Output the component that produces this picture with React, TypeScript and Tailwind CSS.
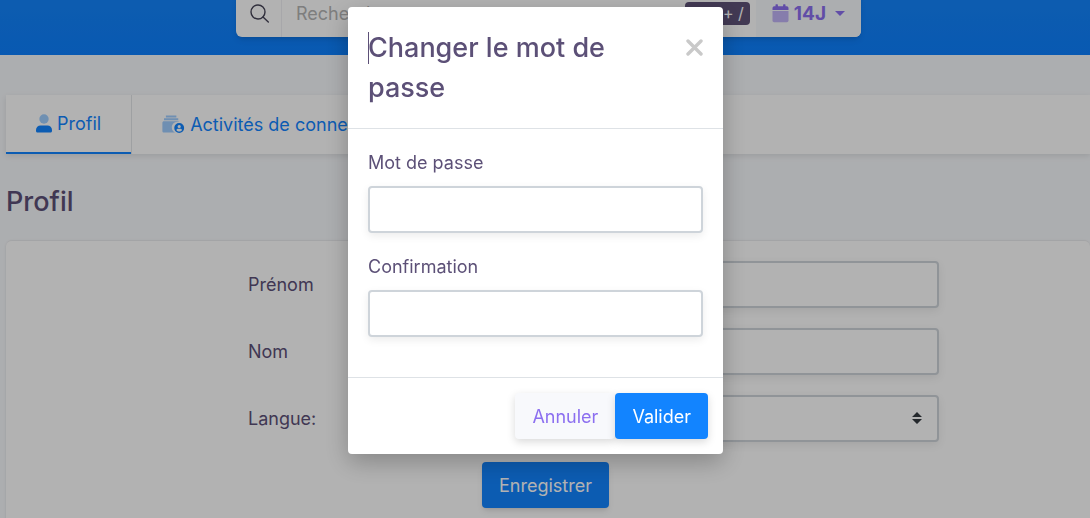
import { useState } from "react";
import type { InputHTMLAttributes } from "react";

const fieldClass =
  "h-[47px] w-full rounded border-2 border-[#ced4da] bg-white px-4 text-[18px] text-[#5c5077] shadow-[0_3px_8px_rgba(0,0,0,0.08)] outline-none";

function SearchIcon() {
  return (
    <svg width="20" height="20" viewBox="0 0 20 20" fill="none" stroke="#464457" strokeWidth="1.4" strokeLinecap="round">
      <circle cx="9" cy="8" r="7" />
      <path d="M14 13 19.300 18" />
    </svg>
  );
}

function CalendarIcon() {
  return (
    <svg width="17" height="19" viewBox="0 0 17 19" fill="#8c6ff0">
      <path d="M.5 7h16v9.6a1.6 1.6 0 0 1-1.6 1.6H2.1A1.6 1.6 0 0 1 .5 16.6z" opacity=".5" />
      <path d="M.5 6V4a1.7 1.7 0 0 1 1.7-1.7H3.5V.8c0-.4.3-.6.6-.6h1.2c.3 0 .6.2.6.6v1.5h5.2V.8c0-.4.3-.6.6-.6h1.2c.3 0 .6.2.6.6v1.5h1.3A1.7 1.7 0 0 1 16.5 4v2z" />
    </svg>
  );
}

function UserIcon() {
  return (
    <svg width="16" height="19" viewBox="0 0 16 19" fill="#1284ff">
      <circle cx="8" cy="5" r="4.7" opacity=".4" />
      <path d="M4.5 11.4h7a4.5 4.5 0 0 1 4.5 4.5v1.1c0 .9-.6 1.5-1.5 1.5h-13C.6 18.5 0 17.9 0 17v-1.1a4.5 4.5 0 0 1 4.5-4.5z" />
    </svg>
  );
}

function ActivityIcon() {
  return (
    <svg width="23" height="19" viewBox="0 0 24 20" fill="#1284ff">
      <g opacity=".4">
        <path d="M4 .5h11v2H4zM2 3.500h15v2H2z" />
        <path d="M2 6.5h14.5c.7 0 1.2.3 1.5.9a6 6 0 0 0-4.5 11.1H2c-1 0-1.7-.7-1.7-1.7V8.200c0-1 .7-1.7 1.7-1.7z" />
      </g>
      <path
        fillRule="evenodd"
        d="M18 8.5a5.2 5.2 0 1 1 0 10.4 5.2 5.2 0 0 1 0-10.4zm0 1.9a1.7 1.7 0 1 0 0 3.400 1.7 1.7 0 0 0 0-3.4zm-1.200 4.100c-1 0-1.700.6-1.700 1.500.7.800 1.700 1.300 2.900 1.300s2.200-.5 2.900-1.300c0-.9-.7-1.500-1.700-1.500z"
      />
    </svg>
  );
}

interface FieldProps extends InputHTMLAttributes<HTMLInputElement> {
  id: string;
  label: string;
}

function ModalField({ id, label, ...props }: FieldProps) {
  return (
    <div className="mb-5">
      <label htmlFor={id} className="mb-2.5 block">
        {label}
      </label>
      <input id={id} className={fieldClass} {...props} />
    </div>
  );
}

function ProfileField({ id, label, ...props }: FieldProps) {
  return (
    <>
      <label htmlFor={id}>{label}</label>
      <input id={id} className={fieldClass} {...props} />
    </>
  );
}

export default function App() {
  const [open, setOpen] = useState(true);

  return (
    <div className="h-screen overflow-hidden bg-[#f7f9fc] font-[Inter,sans-serif] text-[18px] leading-[27px] text-[#5c5077]">
      <header className="flex justify-center bg-linear-to-b from-[#1485fc] to-[#0c80ff] pb-[18px] pl-[7px]">
        <div className="-mt-2.5 flex h-[47px] w-[625px] overflow-hidden rounded-md bg-white shadow-md">
          <label htmlFor="search" className="flex w-[46px] items-center justify-center border-r border-[#f0f0f4]">
            <SearchIcon />
          </label>
          <input
            id="search"
            type="search"
            placeholder="Rechercher"
            className="min-w-0 flex-1 px-3.5 outline-none placeholder:text-[#b5b5b5]"
          />
          <div className="flex items-center pr-1.5">
            <kbd className="rounded-sm bg-[#5f5278] px-1.5 font-[Inter,sans-serif] text-[16px] leading-[23px] text-white">Ctrl + /</kbd>
          </div>
          <button type="button" className="flex items-center gap-[5px] bg-[#f7f9fc] px-4 font-bold text-[#8c6ff0]">
            <CalendarIcon />
            <span className="text-[19px]">14J</span>
            <svg className="ml-1" width="10" height="5" viewBox="0 0 10 5" fill="currentColor">
              <path d="M0 0h10L5 5z" />
            </svg>
          </button>
        </div>
      </header>

      <main className="pl-1.5 pt-10">
        <nav className="flex h-[59px] bg-white shadow-[0_2px_6px_rgba(0,0,0,0.1)]">
          <a href="#profil" className="flex items-center gap-[5px] border-b-2 border-[#1284ff] px-[30px] text-[#1284ff]">
            <UserIcon />
            Profil
          </a>
          <a href="#activites" className="flex items-center gap-[5px] border-l border-[#e3e5e8] px-[30px] text-[#1284ff]">
            <ActivityIcon />
            Activités de connexion
          </a>
        </nav>

        <h1 className="mb-[18px] mt-7 text-[27px] font-medium leading-[40px]">Profil</h1>

        <form className="rounded-t-md border-t border-[#eaebee] bg-white pb-5 pl-[242px] pr-[151px] pt-5 shadow-sm">
          <div className="grid grid-cols-[234px_1fr] items-center gap-y-5">
            <ProfileField id="prenom" label="Prénom" />
            <ProfileField id="nom" label="Nom" />
            <label htmlFor="langue">Langue:</label>
            <div className="relative">
              <select id="langue" className={`${fieldClass} appearance-none`}>
                <option>Français</option>
                <option>English</option>
              </select>
              <svg className="pointer-events-none absolute right-[17px] top-[17px]" width="10" height="12" viewBox="0 0 10 12" fill="#343a40">
                <path d="M0 5h10L5 0zM0 7h10L5 12z" />
              </svg>
            </div>
            <button
              type="submit"
              className="col-start-2 h-[46px] justify-self-start rounded bg-[#1284ff] px-[17px] text-white shadow-md"
            >
              Enregistrer
            </button>
          </div>
        </form>
      </main>

      {open && (
        <div className="fixed inset-0 flex items-start justify-center bg-black/30 pr-[19px] pt-[7px]">
          <div
            role="dialog"
            aria-labelledby="modal-title"
            className="w-[375px] rounded bg-white shadow-[0_8px_24px_rgba(0,0,0,0.25)]"
          >
            <div className="flex items-start justify-between border-b border-[#dee2e6] px-5 pb-5 pt-[21px]">
              <h2 id="modal-title" className="relative flex-1 text-[27px] font-medium leading-[40px]">
                {/* text caret */}
                <span className="absolute left-0 top-1 h-8 w-px bg-[#5c5077]" />
                Changer le mot de passe
              </h2>
              <button type="button" aria-label="Fermer" onClick={() => setOpen(false)} className="flex h-[38px] items-center">
                <svg width="17" height="17" viewBox="0 0 17 17" stroke="#c9c9c9" strokeWidth="3.4" strokeLinecap="round">
                  <path d="M2 2l13 13M15 2L2 15" />
                </svg>
              </button>
            </div>
            <div className="p-5">
              <ModalField id="password" label="Mot de passe" type="password" />
              <ModalField id="confirmation" label="Confirmation" type="password" />
            </div>
            <div className="flex justify-end border-t border-[#dee2e6] p-[15px]">
              <button
                type="button"
                onClick={() => setOpen(false)}
                className="h-[46px] rounded bg-[#f8f9fc] px-[17px] text-[#8c6ff0] shadow-[0_3px_8px_rgba(0,0,0,0.15)]"
              >
                Annuler
              </button>
              <button
                type="button"
                className="h-[46px] rounded bg-[#1284ff] px-[17px] text-white shadow-[0_3px_8px_rgba(0,0,0,0.15)]"
              >
                Valider
              </button>
            </div>
          </div>
        </div>
      )}
    </div>
  );
}
